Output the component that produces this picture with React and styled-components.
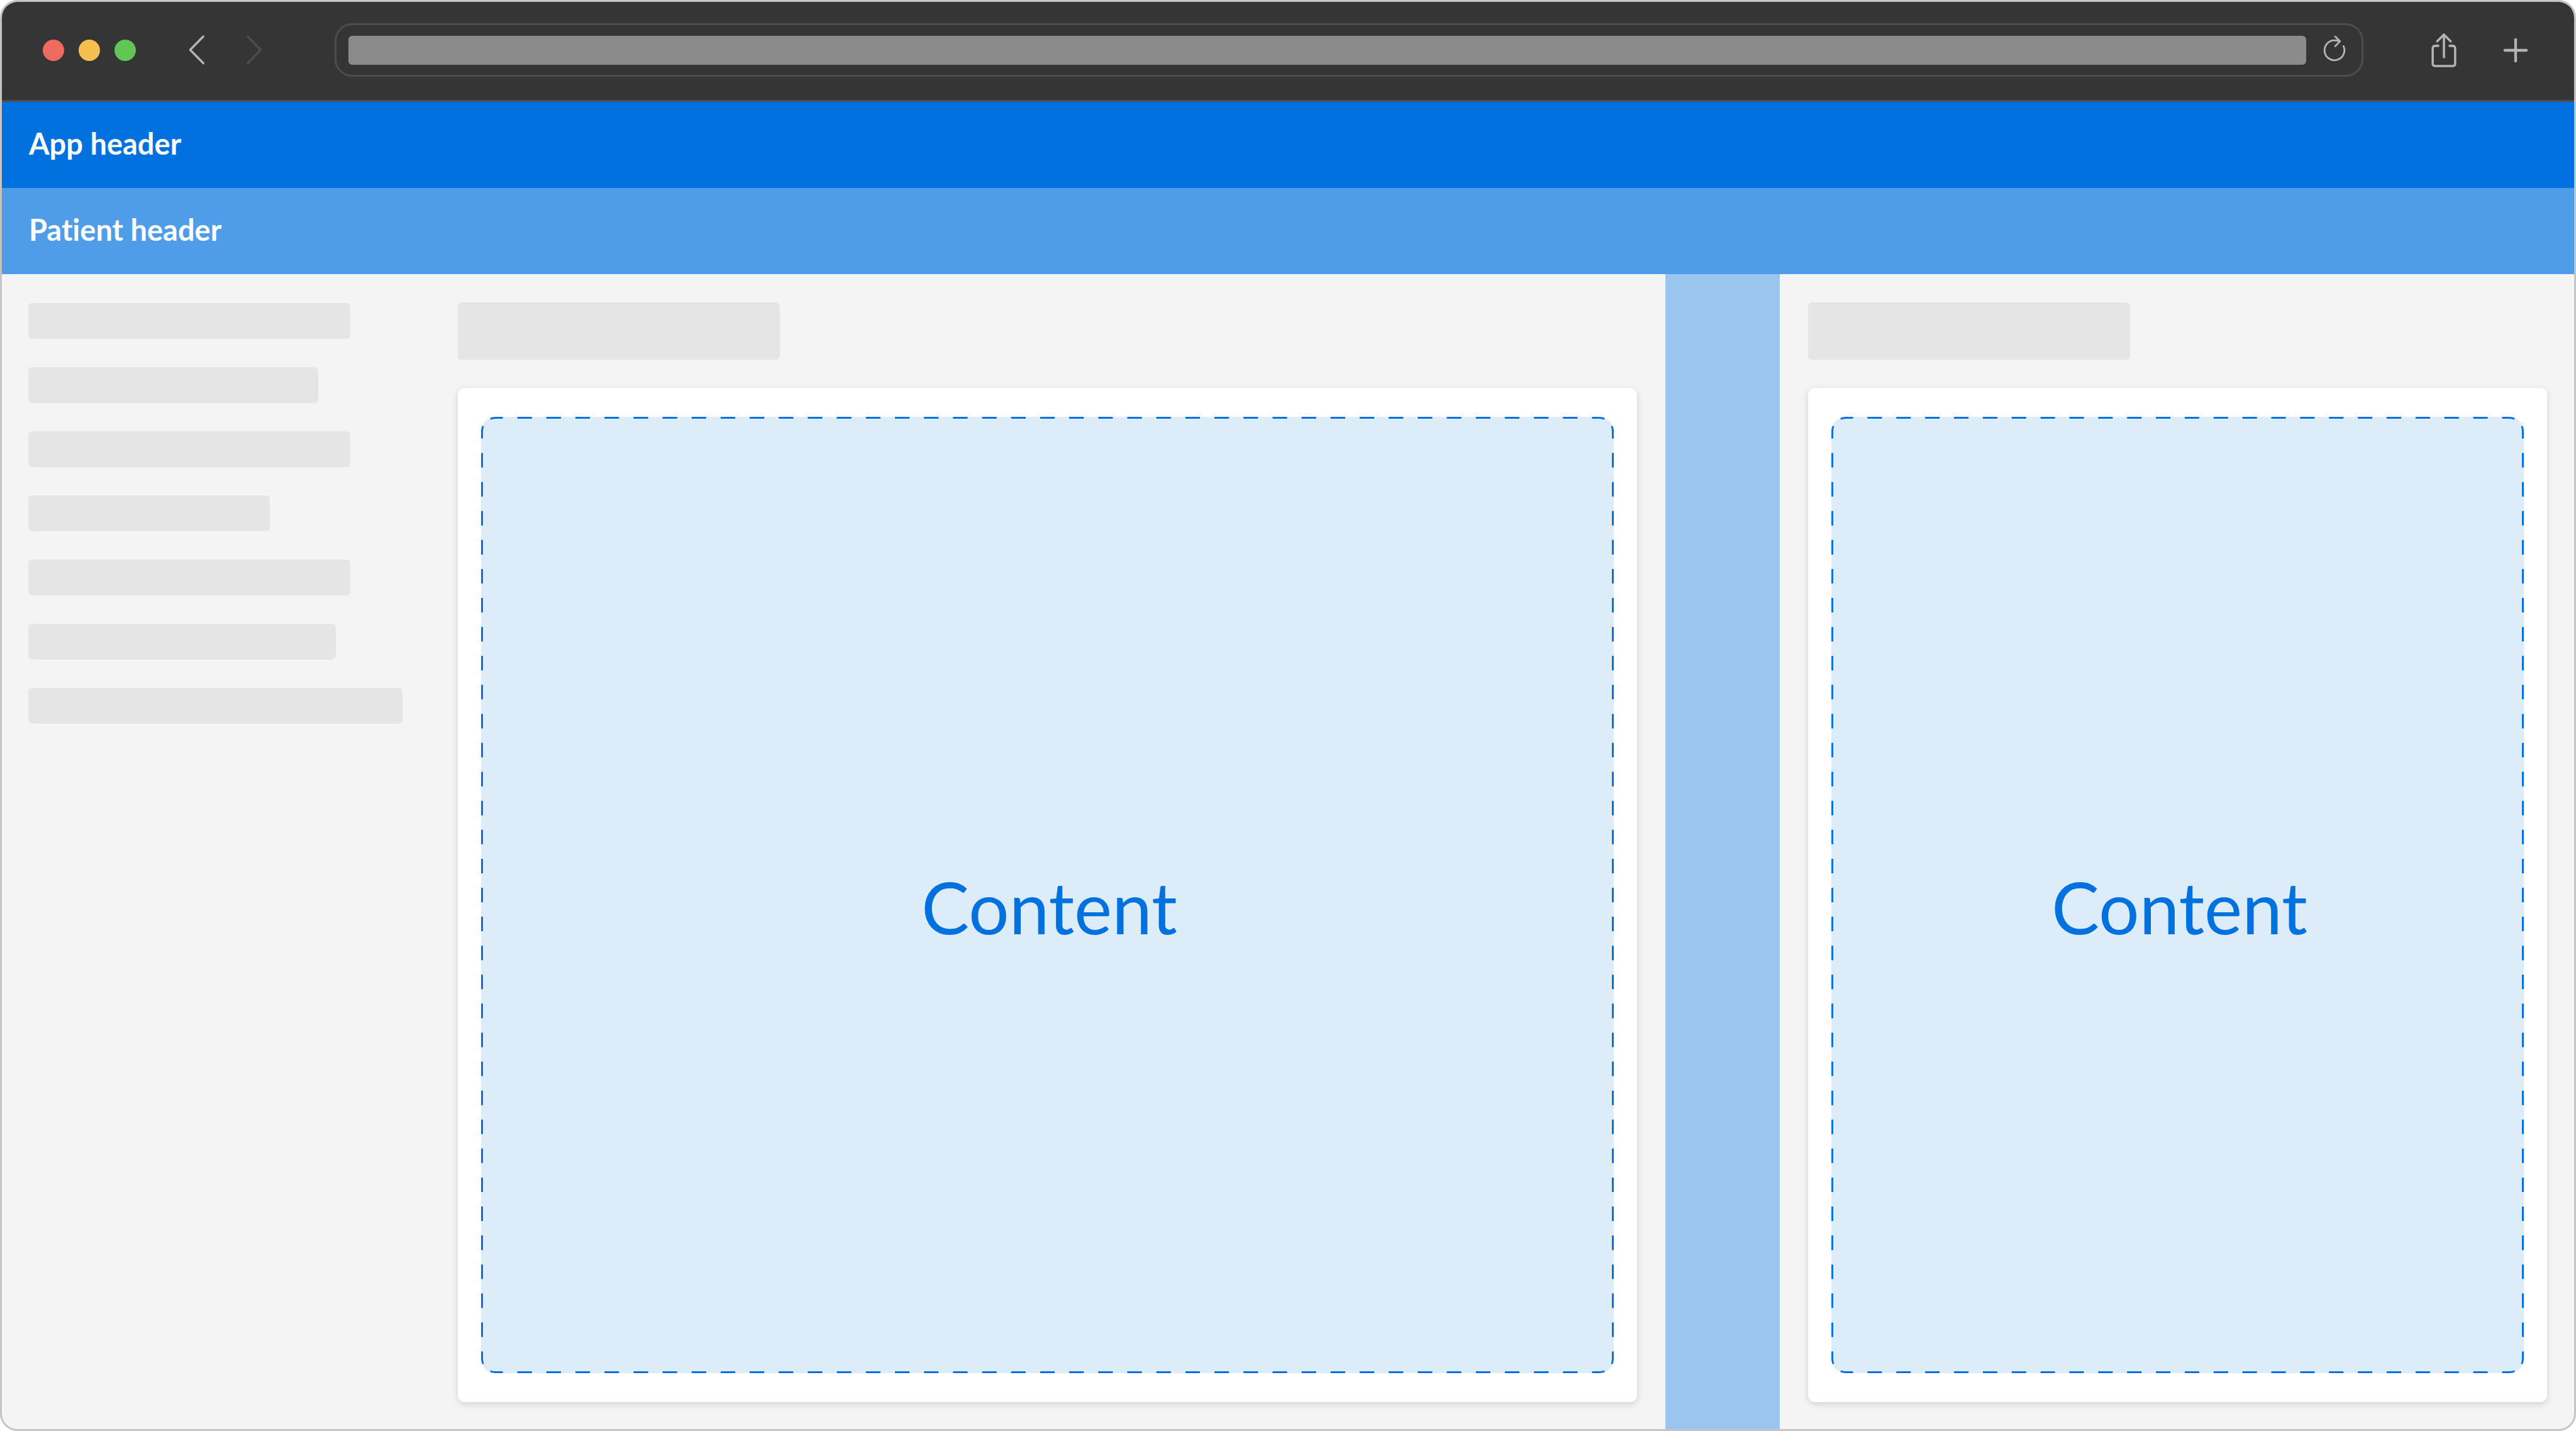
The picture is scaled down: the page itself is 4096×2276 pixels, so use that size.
import React, { useEffect, useRef, useState } from "react";
import styled, { createGlobalStyle } from "styled-components";

const color = {
  frame: "#c4c4c4",
  chrome: "#353535",
  chromeLine: "#4d4d4d",
  chromeIcon: "#b4b4b4",
  address: "#8b8b8b",
  primary: "#0071de",
  secondary: "#4f9ce8",
  rail: "#99c5ef",
  drop: "#dcecf9",
  page: "#f4f4f4",
  skeleton: "#e5e5e5",
};

const GlobalStyle = createGlobalStyle`
  *, *::before, *::after { box-sizing: border-box; }
  body {
    margin: 0;
    background: #fff;
    font-family: Lato, "Open Sans", sans-serif;
    font-variant-ligatures: none;
  }
`;

const Window = styled.div`
  display: flex;
  flex-direction: column;
  min-height: 100vh;
  border: 3px solid ${color.frame};
  border-radius: 28px;
  overflow: hidden;
  background: ${color.page};
`;

const Toolbar = styled.div`
  display: flex;
  align-items: center;
  height: 159px;
  padding: 0 63px 3px 65px;
  border-bottom: 3px solid ${color.chromeLine};
  background: ${color.chrome};
`;

const WindowControls = styled.div`
  display: flex;
  gap: 23px;
`;

const Dot = styled.button`
  width: 34px;
  height: 34px;
  padding: 0;
  border: 0;
  border-radius: 50%;
  background: ${(p) => p.$fill};
`;

const History = styled.div`
  display: flex;
  gap: 57px;
  margin: 0 111px 0 80px;
`;

const Actions = styled.div`
  display: flex;
  gap: 54px;
  margin-left: 98px;
`;

const IconButton = styled.button`
  display: flex;
  width: ${(p) => p.$size}px;
  padding: 0;
  border: 0;
  background: none;
  color: ${(p) => (p.disabled ? color.chromeLine : color.chromeIcon)};

  svg {
    display: block;
    width: 100%;
    fill: none;
    stroke: currentColor;
    stroke-linecap: round;
    stroke-linejoin: round;
  }
`;

const AddressBar = styled.div`
  display: flex;
  flex: 1;
  align-items: center;
  gap: 22px;
  height: 85px;
  padding: 0 20px 0 19px;
  border: 3px solid ${color.chromeLine};
  border-radius: 28px;
`;

const AddressInput = styled.input`
  flex: 1;
  min-width: 0;
  height: 46px;
  padding: 0 16px;
  border: 0;
  border-radius: 6px;
  background: ${color.address};
  font: inherit;
`;

const Header = styled.header`
  display: flex;
  align-items: center;
  height: 137px;
  padding: 0 43px 6px;
  background: ${(p) => p.$fill};
  color: #fff;
  font-size: 47px;
  font-weight: 700;
`;

const Body = styled.div`
  display: grid;
  flex: 1;
  grid-template-columns: 680px 1965fr 182px 1263fr;
`;

const Sidebar = styled.nav`
  padding: 46px 42px;
`;

const NavList = styled.ul`
  display: grid;
  gap: 45px;
  margin: 0;
  padding: 0;
  list-style: none;
`;

const NavItem = styled.li`
  width: ${(p) => p.$width}px;
  height: 57px;
  border-radius: 6px;
  background: ${color.skeleton};
`;

const Column = styled.section`
  display: flex;
  flex-direction: column;
  gap: 45px;
  padding: 45px ${(p) => p.$end}px 43px 45px;
`;

const TitlePlaceholder = styled.div`
  width: 512px;
  height: 91px;
  border-radius: 6px;
  background: ${color.skeleton};
`;

const Card = styled.div`
  display: flex;
  flex: 1;
  padding: 46px 37px;
  border-radius: 11px;
  background: #fff;
  box-shadow: 0 3px 11px rgba(0, 0, 0, 0.15);
`;

const DropZone = styled.div`
  position: relative;
  display: flex;
  flex: 1;
  align-items: center;
  justify-content: center;
  padding: 36px 0 0 6px;
  border-radius: 23px;
  background: ${color.drop};
  color: ${color.primary};
  font-size: 114px;
`;

const Outline = styled.svg`
  position: absolute;
  inset: 0;
  width: 100%;
  height: 100%;
  fill: none;
  stroke: ${color.primary};
  stroke-width: 3px;
`;

const Rail = styled.div`
  background: ${color.rail};
`;

const STROKE = 3;
const RADIUS = 23;
const PITCH = 46;

/* Each edge and corner holds a whole number of dashes, so all four corners look alike. */
function outlineSegments(width, height) {
  const near = STROKE / 2;
  const right = width - near;
  const bottom = height - near;
  const r = RADIUS - near;
  const dashesX = Math.max(1, Math.round((width - 2 * RADIUS) / PITCH));
  const dashesY = Math.max(1, Math.round((height - 2 * RADIUS) / PITCH));
  return [
    [`M${RADIUS} ${near}H${width - RADIUS}`, dashesX],
    [`M${width - RADIUS} ${near}A${r} ${r} 0 0 1 ${right} ${RADIUS}`, 1],
    [`M${right} ${RADIUS}V${height - RADIUS}`, dashesY],
    [`M${right} ${height - RADIUS}A${r} ${r} 0 0 1 ${width - RADIUS} ${bottom}`, 1],
    [`M${width - RADIUS} ${bottom}H${RADIUS}`, dashesX],
    [`M${RADIUS} ${bottom}A${r} ${r} 0 0 1 ${near} ${height - RADIUS}`, 1],
    [`M${near} ${height - RADIUS}V${RADIUS}`, dashesY],
    [`M${near} ${RADIUS}A${r} ${r} 0 0 1 ${RADIUS} ${near}`, 1],
  ];
}

function ContentCard() {
  const zone = useRef(null);
  const [size, setSize] = useState(null);

  useEffect(() => {
    const measure = () =>
      setSize({ width: zone.current.offsetWidth, height: zone.current.offsetHeight });
    measure();
    const observer = new ResizeObserver(measure);
    observer.observe(zone.current);
    return () => observer.disconnect();
  }, []);

  return (
    <Card>
      <DropZone ref={zone}>
        {size && (
          <Outline aria-hidden="true">
            {outlineSegments(size.width, size.height).map(([d, dashes]) => (
              <path key={d} d={d} pathLength={dashes * 4} strokeDasharray="2 2" strokeDashoffset="1" />
            ))}
          </Outline>
        )}
        <span>Content</span>
      </DropZone>
    </Card>
  );
}

const navWidths = [512, 461, 512, 384, 512, 489, 595];

export default function App() {
  return (
    <>
      <GlobalStyle />
      <Window>
        <Toolbar>
          <WindowControls>
            <Dot $fill="#ed6b5f" aria-label="Close" />
            <Dot $fill="#f5bf4f" aria-label="Minimize" />
            <Dot $fill="#62c654" aria-label="Zoom" />
          </WindowControls>
          <History>
            <IconButton $size={34} aria-label="Back">
              <svg viewBox="0 0 48 80" strokeWidth="5">
                <path d="M38.5 10L9 40l29.5 30" />
              </svg>
            </IconButton>
            <IconButton $size={34} aria-label="Forward" disabled>
              <svg viewBox="0 0 48 80" strokeWidth="5">
                <path d="M9.5 10L39 40 9.5 70" />
              </svg>
            </IconButton>
          </History>
          <AddressBar>
            <AddressInput aria-label="Address" readOnly />
            <IconButton $size={46} aria-label="Reload">
              <svg viewBox="3 18 64 64" strokeWidth="4">
                <path d="M47 30C42 28 38.500 28 35 28A22 22 0 1 0 55 41" />
                <path d="M36.500 19.500L47 30 36.500 41" />
              </svg>
            </IconButton>
          </AddressBar>
          <Actions>
            <IconButton $size={60} aria-label="Share">
              <svg viewBox="-8 58 84 84" strokeWidth="5">
                <path d="M21.500 90H14a5 5 0 0 0-5 5v35a5 5 0 0 0 5 5h40a5 5 0 0 0 5-5V95a5 5 0 0 0-5-5h-7.500" />
                <path d="M34 115.500V65.500M19 80l15-15 15 15" />
              </svg>
            </IconButton>
            <IconButton $size={60} aria-label="New tab">
              <svg viewBox="0 0 84 84" strokeWidth="6">
                <path d="M42 18v48M18 42h48" />
              </svg>
            </IconButton>
          </Actions>
        </Toolbar>
        <Header $fill={color.primary}>App header</Header>
        <Header as="div" $fill={color.secondary}>Patient header</Header>
        <Body>
          <Sidebar>
            <NavList>
              {navWidths.map((width, index) => (
                <NavItem key={index} $width={width} />
              ))}
            </NavList>
          </Sidebar>
          <Column $end={45}>
            <TitlePlaceholder />
            <ContentCard />
          </Column>
          <Rail />
          <Column $end={43}>
            <TitlePlaceholder />
            <ContentCard />
          </Column>
        </Body>
      </Window>
    </>
  );
}
